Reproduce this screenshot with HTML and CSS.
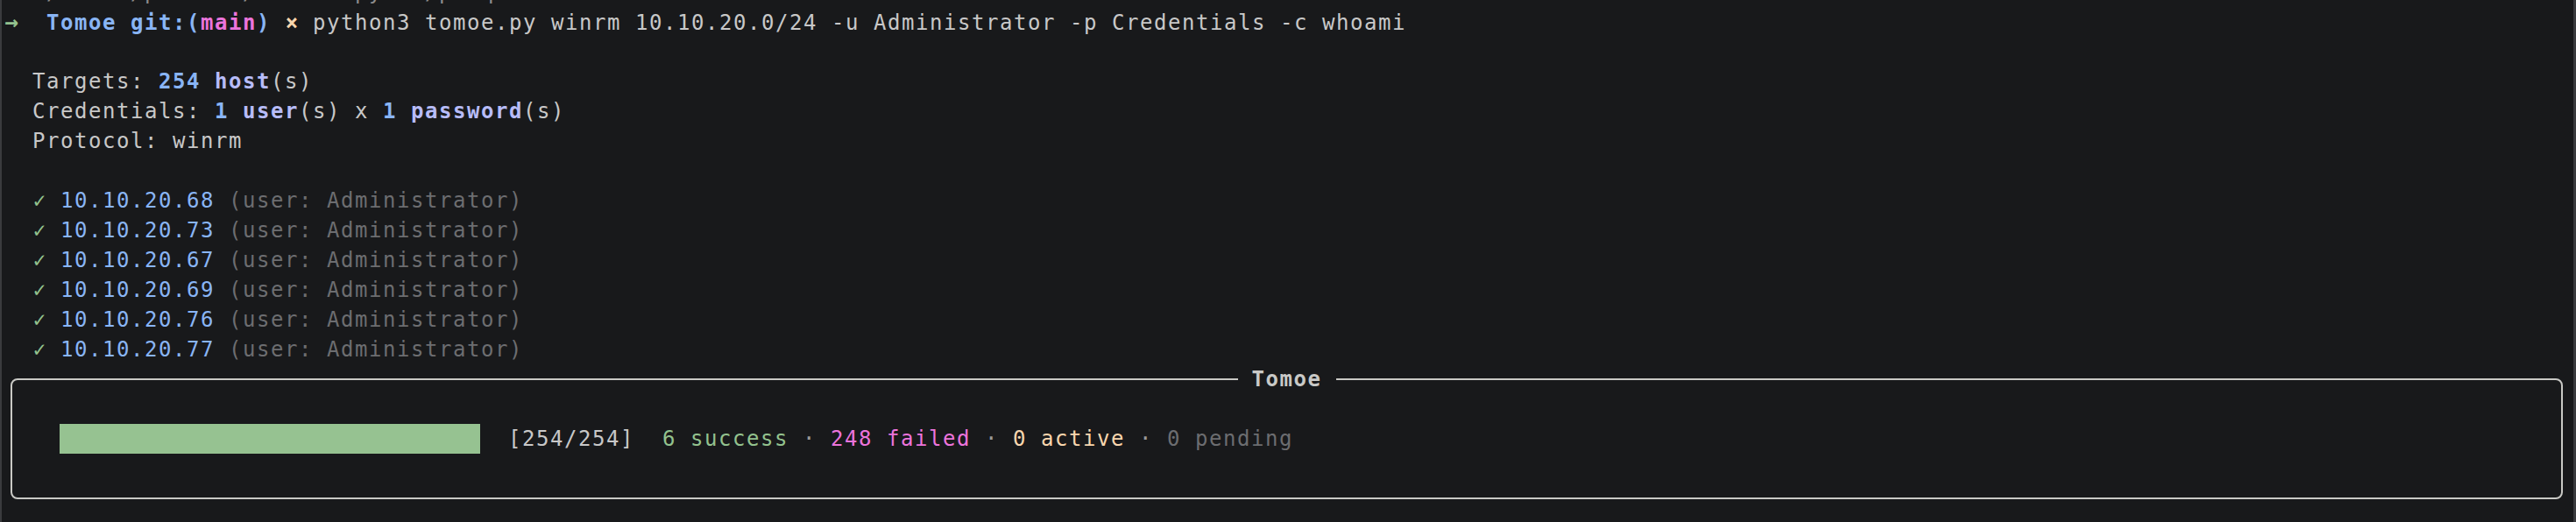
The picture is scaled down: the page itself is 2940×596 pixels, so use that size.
FILE: index.html
```html
<!DOCTYPE html>
<html lang="en">
<head>
<meta charset="utf-8">
<title>Tomoe</title>
<link rel="stylesheet" href="styles.css">
</head>
<body>
<div class="term">
  <div class="line dim-top">  ~/Tools/pentest/tomoe  py  ./p  q</div>
  <div class="line"><span class="sym arrow green">→</span>  <span class="blue bold">Tomoe git:(</span><span class="pink bold">main</span><span class="blue bold">)</span> <span class="sym peach bold">×</span> python3 tomoe.py winrm 10.10.20.0/24 -u Administrator -p Credentials -c whoami</div>
  <div class="line"> </div>
  <div class="line">  Targets: <span class="blue bold">254</span> <span class="lav bold">host</span>(s)</div>
  <div class="line">  Credentials: <span class="blue bold">1</span> <span class="lav bold">user</span>(s) x <span class="blue bold">1</span> <span class="lav bold">password</span>(s)</div>
  <div class="line">  Protocol: winrm</div>
  <div class="line"> </div>
  <div class="line">  <span class="sym green">✓</span> <span class="blue">10.10.20.68</span> <span class="muted">(user: Administrator)</span></div>
  <div class="line">  <span class="sym green">✓</span> <span class="blue">10.10.20.73</span> <span class="muted">(user: Administrator)</span></div>
  <div class="line">  <span class="sym green">✓</span> <span class="blue">10.10.20.67</span> <span class="muted">(user: Administrator)</span></div>
  <div class="line">  <span class="sym green">✓</span> <span class="blue">10.10.20.69</span> <span class="muted">(user: Administrator)</span></div>
  <div class="line">  <span class="sym green">✓</span> <span class="blue">10.10.20.76</span> <span class="muted">(user: Administrator)</span></div>
  <div class="line">  <span class="sym green">✓</span> <span class="blue">10.10.20.77</span> <span class="muted">(user: Administrator)</span></div>
  <fieldset class="panel">
    <legend class="panel-title">Tomoe</legend>
    <div class="progress-row">
      <div class="bar"></div>
      <div class="line stats">  [254/254]  <span class="green">6 success</span> <span class="sep">·</span> <span class="pink">248 failed</span> <span class="sep">·</span> <span class="peach">0 active</span> <span class="sep">·</span> <span class="muted">0 pending</span></div>
    </div>
  </fieldset>
</div>
</body>
</html>
```

FILE: styles.css
```css
html, body {
  margin: 0;
  padding: 0;
  background: #18191b;
  height: 596px;
  overflow: hidden;
}

.term {
  box-sizing: border-box;
  width: 2940px;
  height: 630px;
  margin-top: -26.5px;
  border-left: 2px solid #3a3b3e;
  border-right: 3px solid #3a3b3e;
  padding-left: 3px;
  font-family: "DejaVu Sans Mono", "Liberation Mono", monospace;
  font-size: 24px;
  letter-spacing: 1.55px;
  color: #c8c8c8;
}

.line {
  white-space: pre;
  height: 34px;
  line-height: 34px;
}

.dim-top {
  color: #8d8d8d;
}

.sym {
  display: inline-block;
  width: 16px;
  text-align: center;
  letter-spacing: 0;
}

.arrow {
  font-weight: bold;
  font-size: 26px;
}

.bold { font-weight: bold; }
.green { color: #93c28e; }
.blue { color: #89b5f5; }
.lav { color: #b7bcf8; }
.pink { color: #ec74dc; }
.peach { color: #f8d6ae; }
.muted { color: #6c6d70; }
.sep { color: #9a9a9a; }

.panel {
  margin: 0 12px 0 7px;
  padding: 34px 0 50px 0;
  border: 2px solid #c9c9c5;
  border-radius: 8px;
  min-width: 0;
}

.panel-title {
  margin: 0 auto;
  padding: 0 16px;
  height: 34px;
  line-height: 34px;
  font-weight: bold;
  color: #c9c9c7;
  white-space: pre;
}

.progress-row {
  display: flex;
  align-items: center;
  height: 34px;
  margin-left: 54px;
}

.bar {
  width: 480px;
  height: 34px;
  background: #96c291;
  flex: none;
}
```
